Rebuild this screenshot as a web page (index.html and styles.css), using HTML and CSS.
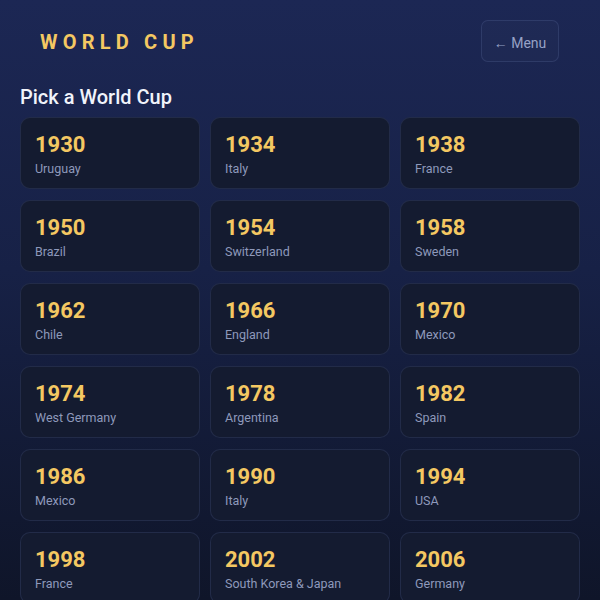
FILE: index.html
```html
<!DOCTYPE html>
<html lang="en">
<head>
<meta charset="utf-8">
<title>World Cup</title>
<link rel="stylesheet" href="styles.css">
</head>
<body>
<div class="app">
  <header class="header">
    <h1 class="logo">WORLD CUP</h1>
    <button class="menu-btn">← Menu</button>
  </header>
  <h2 class="title">Pick a World Cup</h2>
  <div class="grid">
    <div class="card"><div class="year">1930</div><div class="host">Uruguay</div></div>
    <div class="card"><div class="year">1934</div><div class="host">Italy</div></div>
    <div class="card"><div class="year">1938</div><div class="host">France</div></div>
    <div class="card"><div class="year">1950</div><div class="host">Brazil</div></div>
    <div class="card"><div class="year">1954</div><div class="host">Switzerland</div></div>
    <div class="card"><div class="year">1958</div><div class="host">Sweden</div></div>
    <div class="card"><div class="year">1962</div><div class="host">Chile</div></div>
    <div class="card"><div class="year">1966</div><div class="host">England</div></div>
    <div class="card"><div class="year">1970</div><div class="host">Mexico</div></div>
    <div class="card"><div class="year">1974</div><div class="host">West Germany</div></div>
    <div class="card"><div class="year">1978</div><div class="host">Argentina</div></div>
    <div class="card"><div class="year">1982</div><div class="host">Spain</div></div>
    <div class="card"><div class="year">1986</div><div class="host">Mexico</div></div>
    <div class="card"><div class="year">1990</div><div class="host">Italy</div></div>
    <div class="card"><div class="year">1994</div><div class="host">USA</div></div>
    <div class="card"><div class="year">1998</div><div class="host">France</div></div>
    <div class="card"><div class="year">2002</div><div class="host">South Korea &amp; Japan</div></div>
    <div class="card"><div class="year">2006</div><div class="host">Germany</div></div>
  </div>
</div>
</body>
</html>
```
FILE: styles.css
```css
* { box-sizing: border-box; }
html, body { margin: 0; padding: 0; }
body {
  font-family: Roboto, "Liberation Sans", sans-serif;
  background: linear-gradient(180deg, #1c2754 0%, #172146 45%, #0f1529 100%);
  min-height: 600px;
  height: 600px;
  overflow: hidden;
  color: #fff;
}
.app { padding: 20px 20px 0; }
.header {
  display: flex;
  justify-content: space-between;
  align-items: center;
  padding: 0 21px 0 20px;
  height: 42px;
}
.logo {
  margin: 2px 0 0;
  font-size: 20px;
  font-weight: 700;
  letter-spacing: 5.2px;
  color: #f4c862;
}
.menu-btn {
  font-family: inherit;
  font-size: 14px;
  color: #97a2c6;
  background: rgba(255,255,255,0.015);
  border: 1px solid rgba(150,170,230,0.14);
  border-radius: 7px;
  width: 78px;
  height: 42px;
  padding: 3px 0 0;
  cursor: pointer;
}
.title {
  margin: 22px 0 0;
  font-size: 20px;
  font-weight: 500;
  line-height: 26px;
  color: #f1f4fb;
}
.grid {
  margin-top: 7px;
  display: grid;
  grid-template-columns: repeat(3, 1fr);
  column-gap: 10px;
  row-gap: 11px;
}
.card {
  height: 72px;
  background: #141b30;
  border: 1px solid rgba(110,130,200,0.16);
  border-radius: 10px;
  padding: 14px 14px 0;
}
.year {
  font-size: 22px;
  font-weight: 700;
  line-height: 26px;
  color: #f4c862;
}
.host {
  margin-top: 3px;
  font-size: 12.5px;
  line-height: 16px;
  color: #8e99bb;
}
```
